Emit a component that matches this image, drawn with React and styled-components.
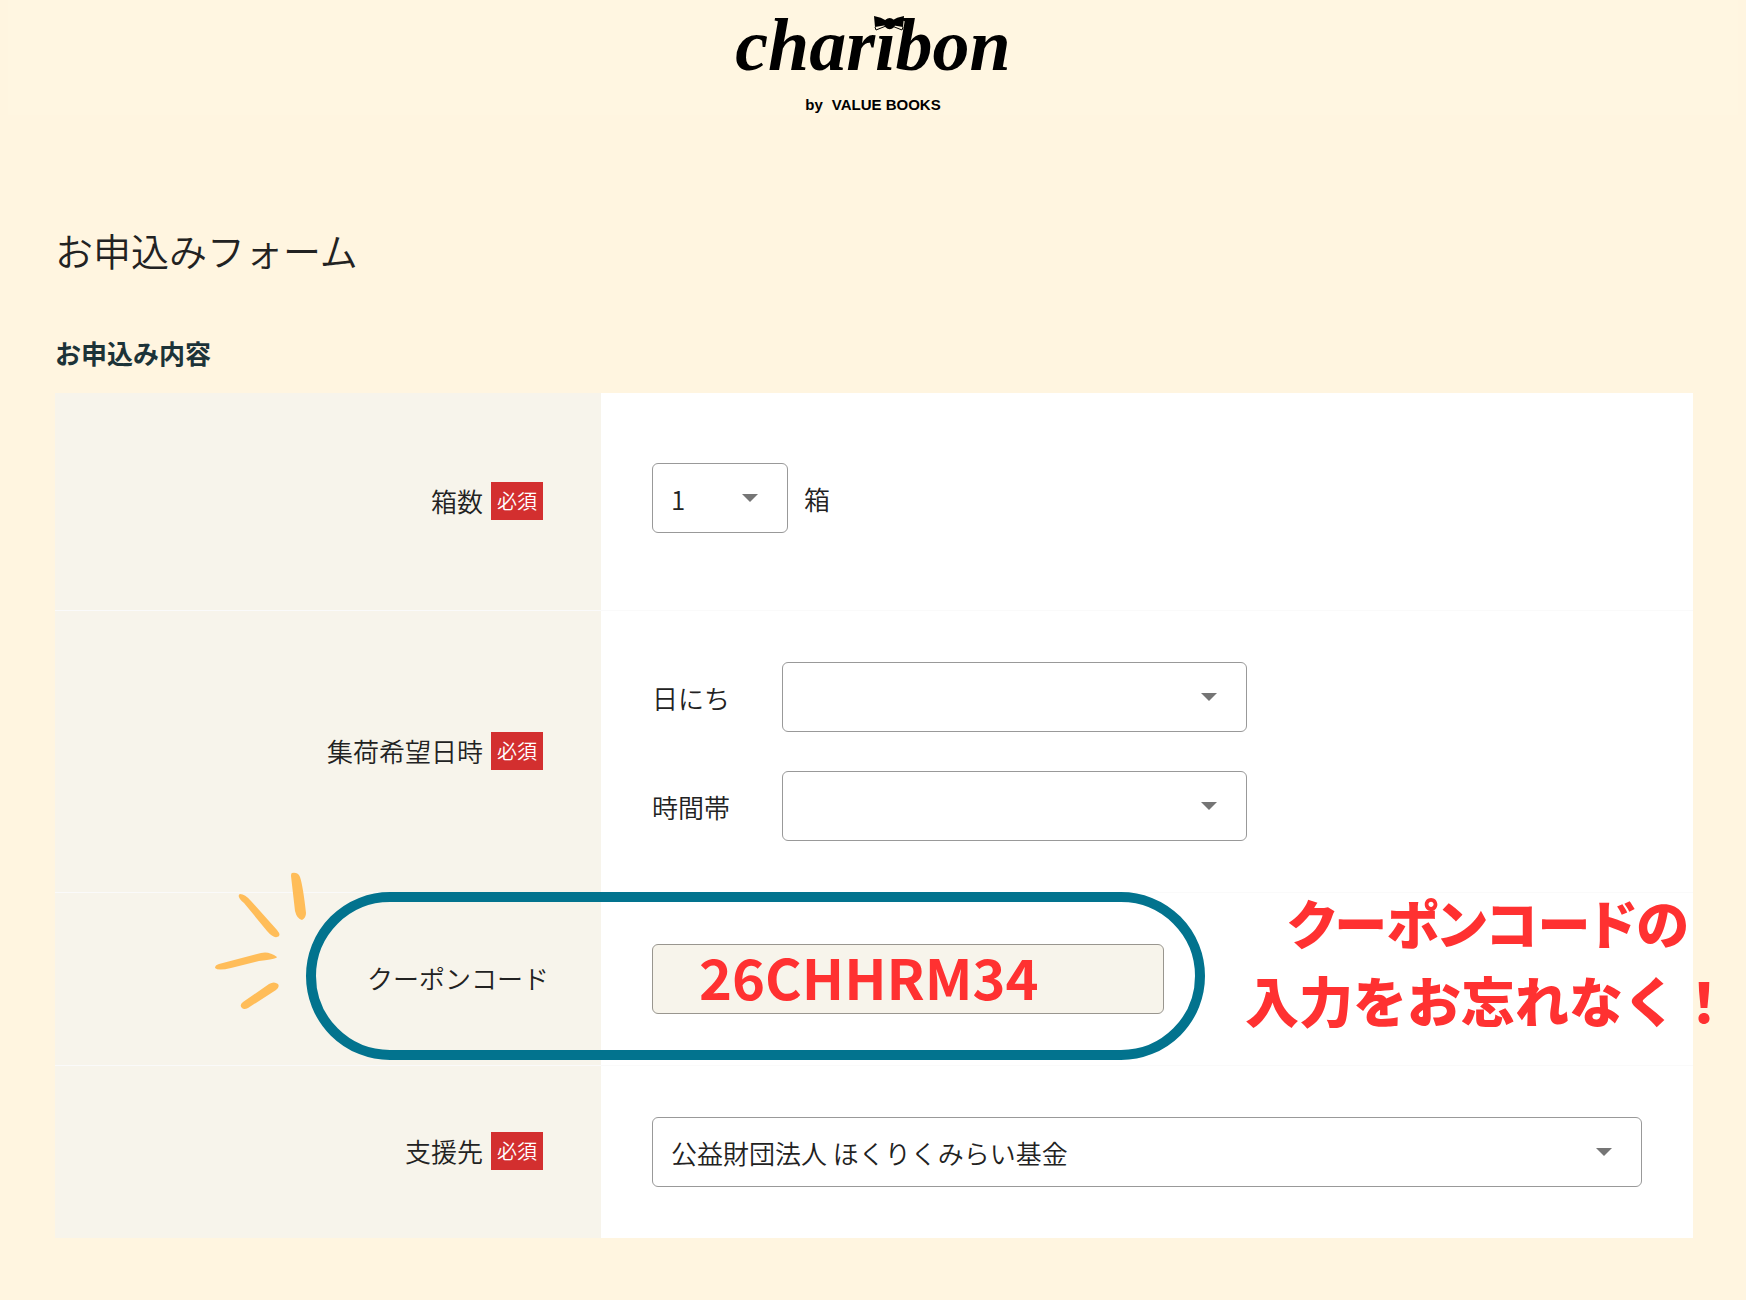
import React from "react";
import styled, { createGlobalStyle } from "styled-components";

const GlobalStyle = createGlobalStyle`
  *, *::before, *::after { box-sizing: border-box; }
  body {
    margin: 0;
    background: #fff5e0;
    color: #222;
    font-family: "Noto Sans CJK JP", "Noto Sans", sans-serif;
    font-size: 26px;
    font-weight: 350;
    line-height: 38px;
  }
`;

const Header = styled.header`
  display: flex;
  flex-direction: column;
  align-items: center;
  gap: 5px;
  margin: 0 8px;
  background: #fff6e1;
  color: #000;
`;

const LogoLink = styled.a`
  position: relative;
  color: inherit;
  text-decoration: none;
  font-family: "Liberation Serif", serif;
  font-size: 74px;
  font-style: italic;
  font-weight: 700;
  line-height: 90px;
`;

const Bow = styled.svg`
  position: absolute;
  left: 138px;
  top: 15px;
  width: 32px;
  height: 16px;
`;

const Tagline = styled.p`
  display: flex;
  gap: 9px;
  margin: 0;
  font-family: "Liberation Sans", sans-serif;
  font-size: 15px;
  font-weight: 700;
  line-height: 20px;
`;

const Main = styled.main`
  padding: 107px 53px 60px 55px;
  overflow-x: clip;
`;

const PageTitle = styled.h1`
  margin: 0 0 56px;
  font-size: 38px;
  font-weight: 350;
  line-height: 56px;
`;

const SectionTitle = styled.h2`
  margin: 0 0 21px;
  color: #1c3338;
  font-size: 26px;
  font-weight: 700;
  line-height: 38px;
`;

const FormGrid = styled.form`
  display: flex;
  flex-direction: column;
`;

const Row = styled.div`
  display: grid;
  grid-template-columns: 1fr 2fr;
  & + & {
    border-top: 1px solid #fafafa;
  }
`;

const LabelCell = styled.div`
  display: flex;
  align-items: center;
  justify-content: flex-end;
  gap: 8px;
  padding: 0 ${(p) => (p.$plain ? 52 : 58)}px 2px 24px;
  background: #f7f4eb;
`;

const Required = styled.span`
  padding: 0 6px;
  background: #d32f2f;
  color: #fff;
  font-size: 20px;
`;

const ValueCell = styled.div`
  position: relative;
  display: flex;
  flex-direction: column;
  gap: 39px;
  padding: ${(p) => (p.$tall ? "70px 51px 77px" : "51px")};
  background: #fff;
`;

const Line = styled.div`
  display: flex;
  align-items: baseline;
  gap: 16px;
`;

const SubLabel = styled.label`
  width: 114px;
`;

const SelectBox = styled.span`
  display: grid;
  align-items: center;
  width: ${(p) => p.$width};
`;

const Select = styled.select`
  grid-area: 1 / 1;
  appearance: none;
  width: 100%;
  height: 70px;
  padding: 2px 56px 0 18px;
  border: 1px solid #999;
  border-radius: 6px;
  background: #fff;
  color: #222;
  font: inherit;
`;

const Caret = styled.svg`
  grid-area: 1 / 1;
  justify-self: end;
  width: 16px;
  height: 8px;
  margin-right: 30px;
  fill: #757575;
  pointer-events: none;
`;

const CouponInput = styled.input`
  width: 512px;
  height: 70px;
  padding: 0 46px 8px;
  border: 1px solid #99968f;
  border-radius: 6px;
  background: #f7f4eb;
  color: #ff3131;
  font: inherit;
  font-size: 56px;
  font-weight: 700;
  line-height: 60px;
`;

const Ring = styled.div`
  position: absolute;
  left: -295px;
  top: -1px;
  width: 899px;
  height: 168px;
  border: 10px solid #02738e;
  border-radius: 84px;
  pointer-events: none;
`;

const Rays = styled.svg`
  position: absolute;
  left: -386px;
  top: -21px;
  width: 94px;
  height: 140px;
  fill: #ffbd59;
`;

const Callout = styled.p`
  position: absolute;
  right: -38px;
  top: -10px;
  margin: 0;
  color: #ff3131;
  font-size: 54px;
  font-weight: 900;
  line-height: 78px;
  text-align: center;
  white-space: nowrap;
`;

const Kana = styled.span`
  font-size: 53px;
  font-feature-settings: "palt";
`;

function Dropdown({ width, options, ...rest }) {
  return (
    <SelectBox $width={width}>
      <Select {...rest}>
        {options.map((o) => (
          <option key={o}>{o}</option>
        ))}
      </Select>
      <Caret viewBox="0 0 16 8" aria-hidden="true">
        <path d="M0 0H16L8 8Z" />
      </Caret>
    </SelectBox>
  );
}

export default function App() {
  return (
    <>
      <GlobalStyle />
      <Header>
        <LogoLink href="#">
          charibon
          <Bow viewBox="0 0 32 16" aria-hidden="true">
            <path d="M1 1Q8 2 14 6V10L2 12Z M31 1Q24 2 18 6V10L30 12Z" />
            <path
              d="M2 12L3 15L13 11M30 12L29 15L19 11"
              fill="none"
              stroke="#000"
            />
          </Bow>
        </LogoLink>
        <Tagline>
          <span>by</span>
          <span>VALUE BOOKS</span>
        </Tagline>
      </Header>
      <Main>
        <PageTitle>お申込みフォーム</PageTitle>
        <SectionTitle>お申込み内容</SectionTitle>
        <FormGrid>
          <Row>
            <LabelCell>
              <label htmlFor="boxes">箱数</label>
              <Required>必須</Required>
            </LabelCell>
            <ValueCell $tall>
              <Line>
                <Dropdown id="boxes" width="136px" options={["1"]} />
                <span>箱</span>
              </Line>
            </ValueCell>
          </Row>
          <Row>
            <LabelCell>
              <span>集荷希望日時</span>
              <Required>必須</Required>
            </LabelCell>
            <ValueCell>
              <Line>
                <SubLabel htmlFor="date">日にち</SubLabel>
                <Dropdown id="date" width="465px" options={[""]} />
              </Line>
              <Line>
                <SubLabel htmlFor="time">時間帯</SubLabel>
                <Dropdown id="time" width="465px" options={[""]} />
              </Line>
            </ValueCell>
          </Row>
          <Row>
            <LabelCell $plain>
              <label htmlFor="coupon">クーポンコード</label>
            </LabelCell>
            <ValueCell>
              <CouponInput id="coupon" defaultValue="26CHHRM34" />
              <Ring />
              <Rays viewBox="0 0 94 140" aria-hidden="true">
                <path d="M77 1Q83 0 85 5Q88 14 91 41Q91 46 87 48Q82 47 80 39L76 4Q76 1 77 1ZM25 22Q30 22 36 29L62 58Q67 64 62 65Q58 66 52 59L29 31Q21 24 25 22ZM0 96Q0 93 4 92L46 81Q54 79 62 85Q62 87 44 89L16 96Q3 99 0 96ZM27 136Q24 133 28 130L54 112Q59 109 63 112Q65 115 61 118L33 136Q29 138 27 136Z" />
              </Rays>
              <Callout>
                <Kana>クーポンコードの</Kana>
                <br />
                入力をお忘れなく！
              </Callout>
            </ValueCell>
          </Row>
          <Row>
            <LabelCell>
              <label htmlFor="recipient">支援先</label>
              <Required>必須</Required>
            </LabelCell>
            <ValueCell>
              <Dropdown
                id="recipient"
                width="100%"
                options={["公益財団法人 ほくりくみらい基金"]}
              />
            </ValueCell>
          </Row>
        </FormGrid>
      </Main>
    </>
  );
}
